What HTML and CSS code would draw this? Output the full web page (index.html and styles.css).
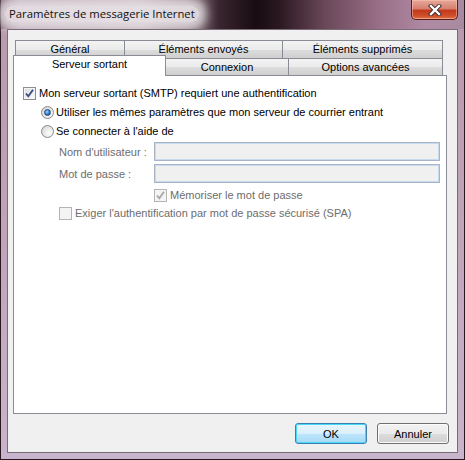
FILE: index.html
```html
<!DOCTYPE html>
<html lang="fr">
<head>
    <meta charset="UTF-8">
    <title>Paramètres de messagerie Internet</title>
    <link rel="stylesheet" href="styles.css">
</head>
<body>
    <div class="window">
        <div class="titlebar">
            <span class="title">Paramètres de messagerie Internet</span>
            <div class="close-btn">
                <svg width="18" height="12" viewBox="0 0 18 12">
                    <path d="M5 2 L13 10 M13 2 L5 10" stroke="#3a2a30" stroke-width="4.2" stroke-linecap="square"/>
                    <path d="M5 2 L13 10 M13 2 L5 10" stroke="#ffffff" stroke-width="2.4" stroke-linecap="square"/>
                </svg>
            </div>
        </div>
        <div class="client">
            <div class="tabs">
                <div class="tab-row back">
                    <div class="tab w-general">Général</div>
                    <div class="tab w-envoyes">Éléments envoyés</div>
                    <div class="tab w-supprimes">Éléments supprimés</div>
                </div>
                <div class="tab-row front">
                    <div class="tab selected w-serveur">Serveur sortant</div>
                    <div class="tab w-connexion">Connexion</div>
                    <div class="tab w-options">Options avancées</div>
                </div>
            </div>
            <div class="pane">
                <label class="row r1">
                    <span class="check">
                        <svg width="11" height="11" viewBox="0 0 11 11"><path d="M2 5.5 L4.3 8.3 L9 1.8" fill="none" stroke="#3b4f86" stroke-width="1.9"/></svg>
                    </span>
                    <span>Mon serveur sortant (SMTP) requiert une authentification</span>
                </label>
                <label class="row r2 indent1">
                    <span class="radio on"><span class="dot"></span></span>
                    <span>Utiliser les mêmes paramètres que mon serveur de courrier entrant</span>
                </label>
                <label class="row r3 indent1">
                    <span class="radio"></span>
                    <span>Se connecter à l'aide de</span>
                </label>
                <div class="row field f1">
                    <span class="field-label">Nom d'utilisateur :</span>
                    <span class="textbox"></span>
                </div>
                <div class="row field f2">
                    <span class="field-label">Mot de passe :</span>
                    <span class="textbox"></span>
                </div>
                <label class="row r6 indent3 disabled">
                    <span class="check off">
                        <svg width="11" height="11" viewBox="0 0 11 11"><path d="M2 5.5 L4.3 8.3 L9 1.8" fill="none" stroke="#a8a8a8" stroke-width="1.9"/></svg>
                    </span>
                    <span>Mémoriser le mot de passe</span>
                </label>
                <label class="row r7 indent2 disabled">
                    <span class="check off"></span>
                    <span>Exiger l'authentification par mot de passe sécurisé (SPA)</span>
                </label>
            </div>
            <div class="buttons">
                <button class="btn default">OK</button>
                <button class="btn">Annuler</button>
            </div>
        </div>
    </div>
</body>
</html>
```

FILE: styles.css
```css
html, body {
    margin: 0;
    padding: 0;
}
body {
    width: 465px;
    height: 460px;
    overflow: hidden;
    font-family: "Liberation Sans", Arial, sans-serif;
    font-size: 11px;
    color: #000;
}
.window {
    width: 465px;
    height: 460px;
    box-sizing: border-box;
    display: flex;
    flex-direction: column;
    border: 1px solid #2a1820;
    border-top: none;
    background: linear-gradient(180deg, #b898ac 0%, #c0a4b8 50%, #c8b4cc 100%);
}
.titlebar {
    height: 29px;
    display: flex;
    align-items: flex-start;
    padding-right: 6px;
    background: linear-gradient(90deg, #8a6a7a 0%, #b8a4b0 4%, #c4b4bc 30%, #9a8890 40%, #3a2630 47%, #180c12 55%, #2a1820 60%, #6a4858 70%, #9a7088 82%, #b08aa4 92%, #a88aa0 100%);
}
.title {
    margin: 6px 0 0 4px;
    padding: 0 4px;
    font-family: "Open Sans", "Noto Sans", sans-serif;
    font-size: 11.3px;
    line-height: 16px;
    color: #101010;
    background: rgba(232, 226, 230, 0.88);
    box-shadow: 0 0 10px 7px rgba(232, 226, 230, 0.85);
    border-radius: 6px;
}
.close-btn {
    margin-left: auto;
    width: 47px;
    height: 20px;
    box-sizing: border-box;
    border: 1px solid #5a2018;
    border-top: none;
    border-radius: 0 0 5px 5px;
    background: linear-gradient(180deg, #e6a898 0%, #d88070 45%, #c23a1c 55%, #d0502c 85%, #e07a50 100%);
    box-shadow: inset 0 0 0 1px rgba(255, 200, 190, 0.5);
    display: flex;
    align-items: center;
    justify-content: center;
}
.client {
    margin: 0 6px 6px 6px;
    flex: 1;
    border: 1px solid #7a6a78;
    background: #f0f0f0;
    display: flex;
    flex-direction: column;
    padding: 10px 8px 0 5px;
}
.tabs {
    display: flex;
    flex-direction: column;
}
.tab-row {
    display: flex;
}
.tab-row.back {
    padding-left: 2px;
    height: 18px;
}
.tab-row.front {
    height: 17px;
    align-items: flex-end;
}
.tab {
    box-sizing: border-box;
    border: 1px solid #898c95;
    border-bottom: none;
    background: linear-gradient(180deg, #f3f3f3 0%, #ebebeb 50%, #dddddd 51%, #cfcfcf 100%);
    text-align: center;
    line-height: 16px;
    height: 18px;
}
.tab + .tab {
    margin-left: -1px;
}
.tab-row.front .tab {
    height: 17px;
    line-height: 16px;
}
.tab-row.front .tab.selected {
    height: 21px;
    margin-bottom: -1px;
    line-height: 17px;
    padding-bottom: 3px;
    background: #fff;
    position: relative;
    z-index: 2;
}
.w-general { width: 110px; }
.w-envoyes { width: 159px; }
.w-supprimes { width: 161px; }
.w-serveur { width: 153px; }
.w-connexion { width: 124px; }
.w-options { width: 155px; }

.pane {
    width: 434px;
    height: 339px;
    box-sizing: border-box;
    border: 1px solid #898c95;
    background: #fff;
    padding: 8px 0 0 9px;
    display: flex;
    flex-direction: column;
}
.row {
    display: flex;
    align-items: center;
    height: 18px;
    white-space: nowrap;
}
.row.r2 { margin-top: 1px; }
.row.r3 { margin-top: 1px; }
.row.f1 { margin-top: 2px; height: 19px; }
.row.f2 { margin-top: 3px; height: 19px; }
.row.r6 { margin-top: 5px; height: 14px; }
.row.r7 { margin-top: 4px; height: 14px; }
.indent1 { padding-left: 18px; }
.indent2 { padding-left: 36px; }
.indent3 { padding-left: 131px; }
.disabled { color: #6d6d6d; }

.check {
    width: 13px;
    height: 13px;
    box-sizing: border-box;
    border: 1px solid #8e8f8f;
    background: linear-gradient(135deg, #dcdcdc 0%, #f0f0f0 60%, #ffffff 100%);
    box-shadow: inset 0 0 0 1px #f4f4f4;
    margin-right: 3px;
    display: flex;
    align-items: center;
    justify-content: center;
}
.check.off {
    border-color: #b4b4b4;
    background: #f4f4f4;
}
.radio {
    width: 13px;
    height: 13px;
    box-sizing: border-box;
    border-radius: 50%;
    border: 1px solid #8a8a8a;
    background: radial-gradient(circle at 65% 65%, #ffffff 0%, #e8e8e8 50%, #c8c8c8 100%);
    margin-right: 2px;
    display: flex;
    align-items: center;
    justify-content: center;
}
.radio .dot {
    width: 7px;
    height: 7px;
    border-radius: 50%;
    background: radial-gradient(circle at 40% 35%, #9ce0ff 0%, #3a8ad8 45%, #0c3c8c 100%);
    border: 1px solid #2a4a7a;
    box-sizing: border-box;
}
.field {
    padding-left: 36px;
    color: #6d6d6d;
}
.field-label {
    width: 95px;
}
.textbox {
    width: 286px;
    height: 19px;
    box-sizing: border-box;
    border: 1px solid #a9b5c4;
    background: #f0f0f0;
    box-shadow: inset 0 0 0 1px #c8daee;
}
.buttons {
    display: flex;
    justify-content: flex-end;
    gap: 10px;
    margin-top: 9px;
}
.btn {
    width: 72px;
    height: 21px;
    box-sizing: border-box;
    font-family: "Liberation Sans", Arial, sans-serif;
    font-size: 11px;
    color: #000;
    border: 1px solid #707070;
    border-radius: 3px;
    background: linear-gradient(180deg, #f2f2f2 0%, #ebebeb 50%, #dddddd 51%, #cfcfcf 100%);
    box-shadow: inset 0 0 0 1px #fcfcfc;
    padding: 0;
}
.btn.default {
    border-color: #3c7fb1;
    background: linear-gradient(180deg, #eaf6fd 0%, #d9f0fc 50%, #bee6fd 51%, #a7d9f5 100%);
    box-shadow: inset 0 0 0 1px #48d8fb;
}
```
